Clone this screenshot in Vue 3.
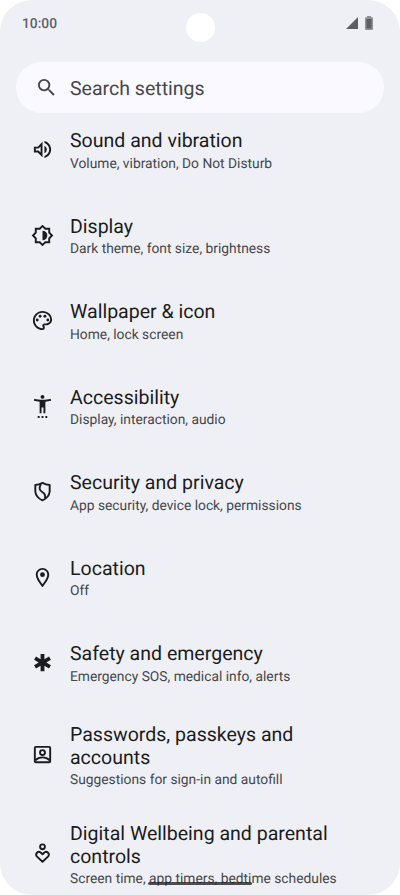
<script setup>
const rows = [
  { icon: 'sound', title: 'Sound and vibration', sub: 'Volume, vibration, Do Not Disturb' },
  { icon: 'display', title: 'Display', sub: 'Dark theme, font size, brightness' },
  { icon: 'palette', title: 'Wallpaper & icon', sub: 'Home, lock screen' },
  { icon: 'access', title: 'Accessibility', sub: 'Display, interaction, audio' },
  { icon: 'shield', title: 'Security and privacy', sub: 'App security, device lock, permissions' },
  { icon: 'pin', title: 'Location', sub: 'Off' },
  { icon: 'star', title: 'Safety and emergency', sub: 'Emergency SOS, medical info, alerts' },
  { icon: 'account', title: 'Passwords, passkeys and accounts', sub: 'Suggestions for sign-in and autofill' },
  { icon: 'wellbeing', title: 'Digital Wellbeing and parental controls', sub: 'Screen time, app timers, bedtime schedules' },
]
</script>

<template>
  <div class="phone">
    <header class="status">
      <span class="time">10:00</span>
      <svg class="signal" viewBox="0 0 12 12"><path d="M12 0V12H0z" /></svg>
      <svg class="battery" viewBox="0 0 8 14">
        <path class="shell" d="M2 0h4v1.2h1.2q.8 0 .8.8v11q0 1-1 1H1q-1 0-1-1V2q0-.8.8-.8H2z" />
        <path d="M1.5 3h5v9.5h-5z" />
      </svg>
    </header>
    <div class="camera"></div>
    <div class="search">
      <svg class="icon" viewBox="0 0 24 24">
        <path d="M15.5 14h-.79l-.28-.27A6.47 6.47 0 0 0 16 9.5 6.5 6.5 0 1 0 9.5 16c1.61 0 3.09-.59 4.23-1.57l.27.28v.79l5 4.99L20.49 19l-4.99-5zm-6 0C7.01 14 5 11.99 5 9.5S7.01 5 9.5 5 14 7.01 14 9.5 11.99 14 9.5 14z" />
      </svg>
      <span class="hint">Search settings</span>
    </div>
    <main class="list">
      <div v-for="row in rows" :key="row.icon" class="row">
        <svg class="icon" viewBox="0 0 24 24">
          <template v-if="row.icon === 'sound'">
            <path d="M3 9v6h4l5 5V4L7 9H3zm7-.17v6.34L7.83 13H5v-2h2.83L10 8.83z" />
            <path d="M14 7.97v8.05A4.5 4.5 0 0 0 16.5 12c0-1.77-1.02-3.29-2.5-4.03z" />
            <path d="M14 3.23v2.06c2.89.86 5 3.54 5 6.71s-2.11 5.85-5 6.71v2.06c4.01-.91 7-4.49 7-8.77s-2.99-7.86-7-8.77z" />
          </template>
          <template v-else-if="row.icon === 'display'">
            <path d="M20 8.69V4h-4.69L12 .69 8.69 4H4v4.69L.69 12 4 15.31V20h4.69L12 23.31 15.31 20H20v-4.69L23.31 12 20 8.69zm-2 5.79V18h-3.52L12 20.48 9.52 18H6v-3.52L3.52 12 6 9.52V6h3.52L12 3.52 14.48 6H18v3.52L20.48 12 18 14.48z" />
            <path d="M12 7v10a5 5 0 0 0 0-10z" />
          </template>
          <template v-else-if="row.icon === 'palette'">
            <path d="M12 22C6.49 22 2 17.51 2 12S6.49 2 12 2s10 4.04 10 9c0 3.31-2.69 6-6 6h-1.77c-.28 0-.5.22-.5.5 0 .12.05.23.13.33.41.47.64 1.06.64 1.67A2.5 2.5 0 0 1 12 22zm0-18c-4.41 0-8 3.59-8 8s3.59 8 8 8c.28 0 .5-.22.5-.5a.54.54 0 0 0-.14-.35c-.41-.46-.63-1.05-.63-1.65a2.5 2.5 0 0 1 2.5-2.5H16c2.21 0 4-1.79 4-4 0-3.86-3.59-7-8-7z" />
            <circle cx="6.5" cy="11.5" r="1.5" />
            <circle cx="9.5" cy="7.5" r="1.5" />
            <circle cx="14.5" cy="7.5" r="1.5" />
            <circle cx="17.5" cy="11.5" r="1.5" />
          </template>
          <path v-else-if="row.icon === 'access'" d="M20.5 4c-2.61.7-5.67 1-8.5 1s-5.89-.3-8.5-1L3 6c1.86.5 4 .83 6 1v12h2v-6h2v6h2V7c2-.17 4.14-.5 6-1l-.5-2zM12 4c1.1 0 2-.9 2-2s-.9-2-2-2-2 .9-2 2 .9 2 2 2zM7 24h2v-2H7v2zm4 0h2v-2h-2v2zm4 0h2v-2h-2v2z" />
          <g v-else-if="row.icon === 'shield'" class="line">
            <path d="M12 3Q8.5 5 4.5 5.2V12Q5.2 18.3 12 21.3 18.8 18.3 19.5 12V5.2Q15.500 5 12 3z" />
            <path d="M10.300 4.300C7.500 9.500 9.500 11.400 12 12.800S15.500 15.700 14.500 19.500" />
          </g>
          <template v-else-if="row.icon === 'pin'">
            <path d="M12 2C8.13 2 5 5.13 5 9c0 5.25 7 13 7 13s7-7.75 7-13c0-3.87-3.13-7-7-7zM7 9c0-2.76 2.24-5 5-5s5 2.24 5 5c0 2.88-2.88 7.19-5 9.88C9.92 16.21 7 11.85 7 9z" />
            <circle cx="12" cy="9" r="2.5" />
          </template>
          <path v-else-if="row.icon === 'star'" d="M20.79 9.23l-2-3.46L14 8.54V3h-4v5.54L5.21 5.77l-2 3.46L8 12l-4.79 2.77 2 3.46L10 15.46V21h4v-5.54l4.79 2.77 2-3.46L16 12z" />
          <g v-else-if="row.icon === 'account'" class="line">
            <rect x="4" y="4" width="16" height="16" rx="1" />
            <circle cx="12" cy="10" r="2.600" />
            <path d="M4.500 18Q7.500 15 12 15T19.500 18" />
          </g>
          <g v-else class="line">
            <circle cx="12" cy="5" r="2.500" />
            <path d="M12 20.600 6 15A2.900 2.900 0 0 1 10 10.900L12 12.800 14 10.900A2.900 2.900 0 0 1 18 15z" />
          </g>
        </svg>
        <div class="text">
          <div class="title">{{ row.title }}</div>
          <div class="sub">{{ row.sub }}</div>
        </div>
      </div>
    </main>
    <div class="handle"></div>
  </div>
</template>

<style>
body {
  background: #fff;
}
</style>

<style scoped>
.phone {
  position: relative;
  box-sizing: border-box;
  width: 400px;
  height: 895px;
  overflow: hidden;
  border-radius: 32px;
  background: #eff0f6;
  color: #1b1c20;
  font-family: Roboto, sans-serif;
  text-rendering: geometricPrecision;
}
.status {
  display: flex;
  align-items: center;
  box-sizing: border-box;
  height: 46px;
  padding: 0 27px 0 22px;
  color: #5e5f65;
}
.time {
  flex: 1;
  padding-top: 1px;
  font-size: 13.800px;
  font-weight: 500;
}
.signal {
  width: 12px;
  height: 12px;
  margin-right: 7px;
}
.battery {
  width: 8px;
  height: 14px;
}
.shell {
  opacity: 0.65;
}
svg {
  display: block;
  fill: currentColor;
}
.camera {
  position: absolute;
  left: 185.500px;
  top: 13px;
  width: 29px;
  height: 29px;
  border-radius: 50%;
  background: #fff;
}
.search {
  display: flex;
  align-items: center;
  gap: 12px;
  box-sizing: border-box;
  height: 50.500px;
  margin: 16px 15.700px 0 15.500px;
  padding: 1px 19.500px 0;
  border-radius: 26px;
  background: #faf9ff;
  color: #45474c;
  font-size: 19.550px;
}
.hint {
  padding-top: 2px;
}
.icon {
  flex: none;
  width: 23px;
  height: 23px;
}
.list {
  margin-top: -5.500px;
}
.row {
  display: flex;
  align-items: center;
  gap: 16px;
  box-sizing: border-box;
  min-height: 85.500px;
  padding: 16px 48px 16px 31px;
}
.row .icon {
  margin-bottom: 0.500px;
}
.text {
  padding-top: 1.300px;
  margin-right: -10px;
  margin-bottom: -1.900px;
}
.title {
  padding-right: 10px;
  font-size: 19.550px;
  line-height: 23px;
}
.sub {
  padding-top: 1.400px;
  color: #45474c;
  font-size: 13.800px;
  line-height: 20px;
  white-space: nowrap;
}
.line {
  fill: none;
  stroke: currentColor;
  stroke-width: 2;
  stroke-linejoin: round;
}
.handle {
  position: absolute;
  left: 148px;
  bottom: 10px;
  width: 104px;
  height: 3.500px;
  border-radius: 2px;
  background: rgba(40, 41, 44, 0.82);
}
</style>
